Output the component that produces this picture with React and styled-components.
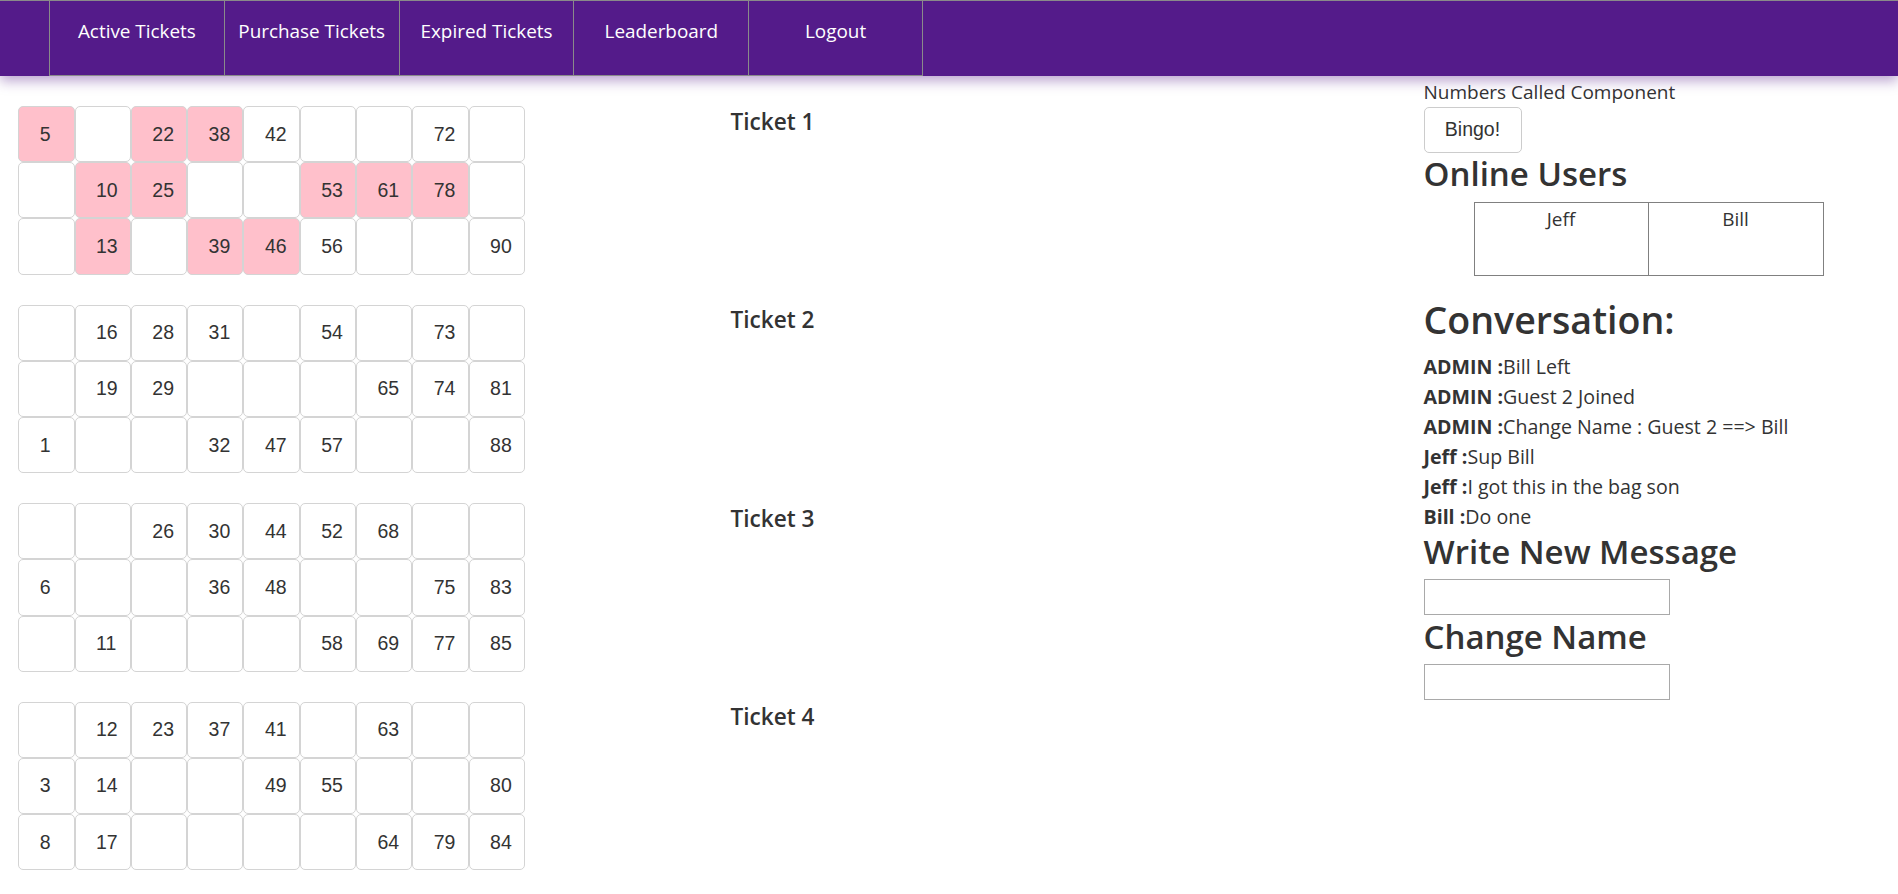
import React from "react";
import styled, { createGlobalStyle } from "styled-components";

const navLinks = [
  "Active Tickets",
  "Purchase Tickets",
  "Expired Tickets",
  "Leaderboard",
  "Logout",
];

const tickets = [
  [
    [5, null, 22, 38, 42, null, null, 72, null],
    [null, 10, 25, null, null, 53, 61, 78, null],
    [null, 13, null, 39, 46, 56, null, null, 90],
  ],
  [
    [null, 16, 28, 31, null, 54, null, 73, null],
    [null, 19, 29, null, null, null, 65, 74, 81],
    [1, null, null, 32, 47, 57, null, null, 88],
  ],
  [
    [null, null, 26, 30, 44, 52, 68, null, null],
    [6, null, null, 36, 48, null, null, 75, 83],
    [null, 11, null, null, null, 58, 69, 77, 85],
  ],
  [
    [null, 12, 23, 37, 41, null, 63, null, null],
    [3, 14, null, null, 49, 55, null, null, 80],
    [8, 17, null, null, null, null, 64, 79, 84],
  ],
];

const called = [5, 10, 13, 22, 25, 38, 39, 46, 53, 61, 78];

const onlineUsers = ["Jeff", "Bill"];

const messages = [
  { from: "ADMIN", text: "Bill Left" },
  { from: "ADMIN", text: "Guest 2 Joined" },
  { from: "ADMIN", text: "Change Name : Guest 2 ==> Bill" },
  { from: "Jeff", text: "Sup Bill" },
  { from: "Jeff", text: "I got this in the bag son" },
  { from: "Bill", text: "Do one" },
];

export default function App() {
  return (
    <>
      <GlobalStyle />
      <NavBar>
        {navLinks.map((link, i) => (
          <NavItem key={link} $last={i === navLinks.length - 1}>
            {link}
          </NavItem>
        ))}
      </NavBar>
      <Main>
        <TicketColumn>
          {tickets.map((ticket, t) => (
            <TicketRow key={t}>
              <Grid>
                {ticket.flat().map((num, i) => (
                  <Cell key={i} $called={num !== null && called.includes(num)}>
                    {num}
                  </Cell>
                ))}
              </Grid>
              <TicketTitle>Ticket {t + 1}</TicketTitle>
            </TicketRow>
          ))}
        </TicketColumn>
        <SideColumn>
          <Label>Numbers Called Component</Label>
          <BingoButton>Bingo!</BingoButton>
          <Heading $top={3} $bottom={11}>
            Online Users
          </Heading>
          <UsersTable>
            {onlineUsers.map((u) => (
              <UserCell key={u}>{u}</UserCell>
            ))}
          </UsersTable>
          <BigHeading>Conversation:</BigHeading>
          <Messages>
            {messages.map((m, i) => (
              <Message key={i}>
                <b>{m.from} :</b>
                {m.text}
              </Message>
            ))}
          </Messages>
          <Heading $top={2} $bottom={10}>
            Write New Message
          </Heading>
          <TextBox type="text" />
          <Heading $top={4} $bottom={10}>
            Change Name
          </Heading>
          <TextBox type="text" />
        </SideColumn>
      </Main>
    </>
  );
}

const GlobalStyle = createGlobalStyle`
  * { box-sizing: border-box; }
  body {
    margin: 0;
    background: #fff;
    color: #333;
    font-family: "Open Sans", "Noto Sans", sans-serif;
    font-size: 19px;
  }
`;

const NavBar = styled.nav`
  position: relative;
  z-index: 1;
  display: flex;
  height: 76px;
  padding-left: 49px;
  background: #541b8a;
  border-top: 1px solid #8a8a8a;
  box-shadow: 0 5px 12px rgba(84, 27, 138, 0.4);
`;

const NavItem = styled.a`
  flex: 0 0 174.8px;
  height: 75px;
  padding-top: 18px;
  border-left: 1px solid #8a8a8a;
  border-bottom: 1px solid #8a8a8a;
  border-right: ${(p) => (p.$last ? "1px solid #8a8a8a" : "none")};
  color: #fff;
  font-size: 18.9px;
  line-height: 25px;
  text-align: center;
  cursor: pointer;
`;

const Main = styled.div`
  display: grid;
  grid-template-columns: 3fr 1fr;
  padding-top: 3px;
`;

const TicketColumn = styled.div`
  padding-top: 27px;
`;

const TicketRow = styled.div`
  display: grid;
  grid-template-columns: 1fr 1fr;
  margin-bottom: 30px;
`;

const Grid = styled.div`
  display: grid;
  grid-template-columns: repeat(9, 56.3px);
  grid-auto-rows: 56.2px;
  padding-left: 18.3px;
`;

const Cell = styled.button`
  padding: 0 0 0 20.4px;
  border: 1px solid #d4d4d4;
  border-radius: 5px;
  background: ${(p) => (p.$called ? "#ffc0cb" : "#fff")};
  color: #333;
  font-family: "Liberation Sans", Arial, sans-serif;
  font-size: 19.5px;
  text-align: left;
`;

const TicketTitle = styled.h4`
  margin: 3.6px 0 0;
  padding-left: 18.75px;
  font-size: 22.6px;
  font-weight: 600;
  line-height: 24.2px;
`;

const SideColumn = styled.div`
  display: flex;
  flex-direction: column;
  align-items: flex-start;
`;

const Label = styled.div`
  line-height: 26px;
`;

const BingoButton = styled.button`
  width: 98px;
  height: 45.6px;
  margin-top: 2px;
  border: 1px solid #ccc;
  border-radius: 5px;
  background: #fff;
  color: #333;
  font-family: "Liberation Sans", Arial, sans-serif;
  font-size: 19.5px;
`;

const Heading = styled.h2`
  margin: ${(p) => p.$top}px 0 ${(p) => p.$bottom}px;
  font-size: 33px;
  font-weight: 600;
  line-height: 35.2px;
`;

const BigHeading = styled.h1`
  margin: 23px 0 11px;
  font-size: 37.6px;
  font-weight: 600;
  line-height: 41.8px;
`;

const UsersTable = styled.div`
  display: grid;
  grid-template-columns: 175px 175px;
  height: 74.3px;
  margin-left: 50px;
`;

const UserCell = styled.div`
  padding-top: 3px;
  border: 1px solid #808080;
  text-align: center;
  line-height: 26px;
  & + & {
    margin-left: -1px;
  }
`;

const Messages = styled.div`
  display: flex;
  flex-direction: column;
`;

const Message = styled.div`
  font-size: 19.6px;
  line-height: 30px;
  b {
    font-weight: 700;
  }
`;

const TextBox = styled.input`
  width: 246px;
  height: 36px;
  border: 1px solid #a9a9a9;
  border-radius: 0;
  background: #fff;
  font-family: inherit;
`;
